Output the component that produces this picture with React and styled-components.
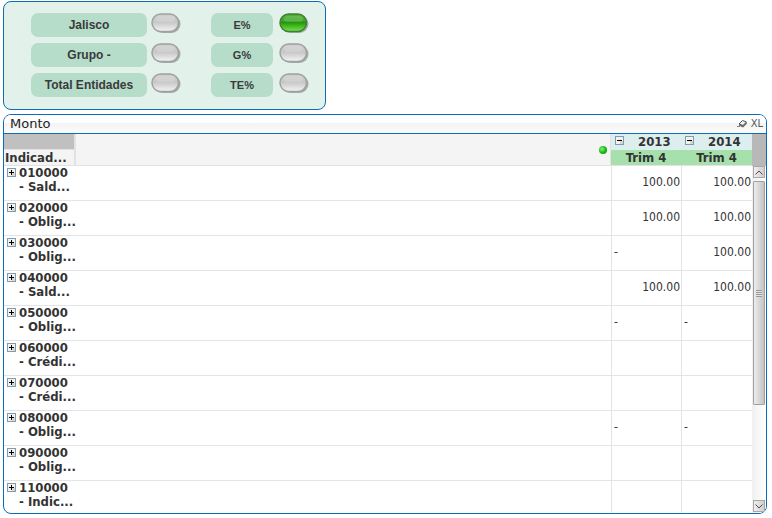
import React from 'react'
import styled, { createGlobalStyle } from 'styled-components'

const filters = [
    { left: 'Jalisco', right: 'E%', active: true },
    { left: 'Grupo -', right: 'G%', active: false },
    { left: 'Total Entidades', right: 'TE%', active: false },
]

const rows = [
    { code: '010000', name: '- Sald...', values: ['100.00', '100.00'] },
    { code: '020000', name: '- Oblig...', values: ['100.00', '100.00'] },
    { code: '030000', name: '- Oblig...', values: ['-', '100.00'] },
    { code: '040000', name: '- Sald...', values: ['100.00', '100.00'] },
    { code: '050000', name: '- Oblig...', values: ['-', '-'] },
    { code: '060000', name: '- Crédi...', values: ['', ''] },
    { code: '070000', name: '- Crédi...', values: ['', ''] },
    { code: '080000', name: '- Oblig...', values: ['-', '-'] },
    { code: '090000', name: '- Oblig...', values: ['', ''] },
    { code: '110000', name: '- Indic...', values: ['', ''] },
]

const years = ['2013', '2014']

const Lamp = ({ id, on }) => (
    <LampButton type='button' aria-labelledby={id} aria-pressed={on}>
        <svg width='30' height='22' viewBox='0 0 30 22'>
            <defs>
                <linearGradient id={`fill-${id}`} x1='0' y1='0' x2='0' y2='1'>
                    <stop offset='0' stopColor={on ? '#4fb034' : '#cfcfcf'} />
                    <stop offset='0.4' stopColor={on ? '#3fa627' : '#c8c8c8'} />
                    <stop offset='0.45' stopColor={on ? '#1f9206' : '#c6c6c6'} />
                    <stop offset='1' stopColor={on ? '#76e64e' : '#f4f4f4'} />
                </linearGradient>
            </defs>
            <rect x='2.5' y='2' width='27' height='18' rx='9' fill='#7f8a84' opacity='0.65' />
            <rect
                x='1'
                y='1'
                width='26.5'
                height='17.5'
                rx='8.75'
                fill={`url(#fill-${id})`}
                stroke={on ? '#3f7f35' : '#a0a0a0'}
                strokeWidth='1.5'
            />
            <rect
                x='5'
                y='3'
                width='19'
                height='6'
                rx='3'
                fill='#ffffff'
                opacity={on ? 0.15 : 0.15}
            />
        </svg>
    </LampButton>
)

const ToggleIcon = ({ plus }) => (
    <svg width='9' height='9' viewBox='0 0 9 9' shapeRendering='crispEdges'>
        <rect width='9' height='9' fill='#7c9cba' />
        <rect x='1' y='1' width='7' height='7' fill='#f4f1ea' />
        <rect x='5' y='5' width='3' height='3' fill='#dcd6ca' />
        <rect x='2' y='4' width='5' height='1' fill='#000000' />
        {plus && <rect x='4' y='2' width='1' height='5' fill='#000000' />}
    </svg>
)

const Arrow = ({ down }) => (
    <svg width='8' height='5' viewBox='0 0 8 5'>
        <path
            d={down ? 'M0.5 0.5 L4 4 L7.5 0.5' : 'M0.5 4.5 L4 1 L7.5 4.5'}
            fill='none'
            stroke='#6b3f46'
        />
    </svg>
)

const FilterPanel = () => (
    <Filters>
        {filters.map((f, i) => (
            <React.Fragment key={f.left}>
                <FilterLabel id={`entity-${i}`}>{f.left}</FilterLabel>
                <Lamp id={`entity-${i}`} on={false} />
                <FilterLabel id={`percent-${i}`} $small>
                    {f.right}
                </FilterLabel>
                <Lamp id={`percent-${i}`} on={f.active} />
            </React.Fragment>
        ))}
    </Filters>
)

const App = () => {
    return (
        <Page>
            <GlobalStyle />
            <FilterPanel />

            <Sheet>
                <Caption>
                    <h1>Monto</h1>
                    <CaptionTools>
                        <button type='button' aria-label='Clear'>
                            <svg width='12' height='10' viewBox='0 0 12 10'>
                                <path
                                    d='M3 5 L6.5 1.5 L10.5 3 L7 6.5 Z'
                                    fill='#f2f2f2'
                                    stroke='#4c4c4c'
                                />
                                <path
                                    d='M3 5 L3 6.5 L7 8.5 L10.8 4.8 L10.5 3 L7 6.5 Z'
                                    fill='#666666'
                                />
                                <path d='M1 7.5 H4' stroke='#888888' />
                            </svg>
                        </button>
                        <button type='button'>XL</button>
                    </CaptionTools>
                </Caption>

                <Content>
                    <Grid>
                        <colgroup>
                            <Col $w='72px' />
                            <Col />
                            <Col $w='70px' />
                            <Col $w='71px' />
                        </colgroup>
                        <thead>
                            <tr>
                                <BlankHead />
                                <SpanHead rowSpan={2}>
                                    <Dot />
                                </SpanHead>
                                {years.map((y) => (
                                    <YearHead key={y} scope='col'>
                                        <div>
                                            <Toggle type='button' aria-label={`Collapse ${y}`}>
                                                <ToggleIcon />
                                            </Toggle>
                                            <span>{y}</span>
                                        </div>
                                    </YearHead>
                                ))}
                            </tr>
                            <tr>
                                <NameHead scope='col'>Indicad...</NameHead>
                                {years.map((y) => (
                                    <QuarterHead key={y} scope='col'>
                                        Trim 4
                                    </QuarterHead>
                                ))}
                            </tr>
                        </thead>
                        <tbody>
                            {rows.map((r) => (
                                <Row key={r.code}>
                                    <RowHead scope='row'>
                                        <div>
                                            <Toggle type='button' aria-label={`Expand ${r.code}`}>
                                                <ToggleIcon plus />
                                            </Toggle>
                                            <span>
                                                {r.code}
                                                <br />
                                                {r.name}
                                            </span>
                                        </div>
                                    </RowHead>
                                    <td />
                                    {r.values.map((v, i) => (
                                        <Value key={years[i]} $empty={v === '-'}>
                                            {v}
                                        </Value>
                                    ))}
                                </Row>
                            ))}
                        </tbody>
                    </Grid>

                    {/** scroll rail */}
                    <Rail>
                        <Corner />
                        <ScrollButton type='button' aria-label='Scroll up'>
                            <Arrow />
                        </ScrollButton>
                        <Track>
                            <Thumb>
                                <Grip />
                            </Thumb>
                        </Track>
                        <ScrollButton type='button' aria-label='Scroll down'>
                            <Arrow down />
                        </ScrollButton>
                    </Rail>
                </Content>
            </Sheet>
        </Page>
    )
}

export default App

const GlobalStyle = createGlobalStyle`
    * {
        box-sizing: border-box;
    }

    body {
        margin: 0;
        background: #ffffff;
    }

    button {
        display: block;
        padding: 0;
        border: 0;
        background: none;
        font: inherit;
        color: inherit;
        cursor: pointer;
    }

    svg {
        display: block;
    }
`

const Page = styled.main`
    display: flex;
    flex-direction: column;
    align-items: flex-start;
    gap: 4px;
    padding: 1px 5px 4px 3px;
    font-family: 'DejaVu Sans Condensed', 'DejaVu Sans', sans-serif;
    color: #333333;
`

const Filters = styled.section`
    display: grid;
    grid-template-columns: 116px 56px 64px 30px;
    grid-auto-rows: 24px;
    gap: 6px 4px;
    padding: 11px 16px 12px 27px;
    border: 1px solid #0d6cb8;
    border-radius: 8px;
    background: #e2f1ea;
`

const FilterLabel = styled.span`
    display: flex;
    align-items: center;
    justify-content: center;
    margin-right: ${(props) => (props.$small ? '2px' : '0')};
    border-radius: 7px;
    background: #b6dcca;
    font-family: 'Liberation Sans', Arial, sans-serif;
    font-size: ${(props) => (props.$small ? '11px' : '12px')};
    font-weight: 700;
    line-height: 14px;
    color: #3a3a3a;
`

const LampButton = styled.button`
    width: 30px;
    height: 22px;
`

const Sheet = styled.section`
    align-self: stretch;
    overflow: hidden;
    border: 1px solid #0d6cb8;
    border-radius: 8px;
`

const Caption = styled.header`
    display: flex;
    align-items: center;
    justify-content: space-between;
    height: 19px;
    padding: 0 3px 0 6px;
    border-bottom: 1px solid #0d6cb8;
    background: linear-gradient(#ffffff 45%, #f3f3f3 45%, #fbfbfb);

    h1 {
        margin: 0;
        font-family: 'DejaVu Sans', sans-serif;
        font-size: 13px;
        font-weight: 400;
        line-height: 16px;
        color: #222222;
    }
`

const CaptionTools = styled.div`
    display: flex;
    align-items: center;
    gap: 3px;
    font-size: 11px;
    line-height: 14px;
    color: #555555;
`

const Content = styled.div`
    display: flex;
`

const Grid = styled.table`
    flex: 1;
    min-width: 0;
    table-layout: fixed;
    border-collapse: separate;
    border-spacing: 0;
    font-size: 13px;
    line-height: 14px;

    th,
    td {
        padding: 0;
    }

    th {
        font-weight: 700;
    }
`

const Col = styled.col`
    width: ${(props) => props.$w || 'auto'};
`

const BlankHead = styled.td`
    height: 16px;
    border-right: 2px solid #e2e2e2;
    border-bottom: 1px solid #e2e2e2;
    background: #c0c0c0;
`

const SpanHead = styled.td`
    border-right: 1px solid #e2e2e2;
    border-bottom: 1px solid #e2e2e2;
    background: #f4f4f4;
`

const Dot = styled.i`
    display: block;
    width: 8px;
    height: 8px;
    margin: 0 3px 0 auto;
    border-radius: 50%;
    background: radial-gradient(circle at 3px 3px, #8cf07c, #16c016 50%, #0a7a0a);
`

const YearHead = styled.th`
    height: 16px;
    background: #dceeee;
    vertical-align: top;

    div {
        display: flex;
        align-items: flex-start;
        padding-left: 4px;
    }

    button {
        margin-top: 2px;
    }

    span {
        padding-left: 14px;
        line-height: 16px;
    }
`

const NameHead = styled.th`
    && {
        padding-left: 1px;
    }
    height: 16px;
    border-right: 2px solid #e2e2e2;
    border-bottom: 1px solid #e2e2e2;
    background: #f4f4f4;
    text-align: left;
    vertical-align: bottom;
    white-space: nowrap;
`

const QuarterHead = styled.th`
    height: 16px;
    border-bottom: 1px solid #e2e2e2;
    background: #a6e0ad;
    text-align: center;
    vertical-align: bottom;
`

const Toggle = styled.button`
    flex: none;
    width: 9px;
    height: 9px;
`

const Row = styled.tr`
    th,
    td {
        height: 35px;
        border-bottom: 1px solid #e4e4e4;
    }

    &:last-child th,
    &:last-child td {
        height: 32px;
        border-bottom: 0;
    }
`

const RowHead = styled.th`
    text-align: left;
    vertical-align: top;
    white-space: nowrap;

    div {
        display: flex;
        gap: 3px;
        padding-left: 3px;
    }

    button {
        margin-top: 2px;
    }
`

const Value = styled.td`
    && {
        padding: 0 1px 2px 2px;
    }
    border-left: 1px solid #e4e4e4;
    font-size: 12px;
    text-align: ${(props) => (props.$empty ? 'left' : 'right')};
`

const Rail = styled.div`
    display: flex;
    flex-direction: column;
    align-items: center;
    width: 14px;
    padding-bottom: 1px;
    background: linear-gradient(90deg, #f0f0f0, #ffffff);
`

const Corner = styled.div`
    align-self: stretch;
    height: 32px;
    background: #b8b8b8;
`

const ScrollButton = styled.button`
    display: flex;
    align-items: center;
    justify-content: center;
    width: 12px;
    height: 12px;
    border: 1px solid #a8a8a8;
    background: linear-gradient(90deg, #eeeeee, #cfcfcf);
`

const Track = styled.div`
    flex: 1;
    width: 12px;
    padding: 3px 0;
`

const Thumb = styled.div`
    display: flex;
    align-items: center;
    justify-content: center;
    height: 71%;
    border: 1px solid #a0a0a0;
    border-radius: 1px;
    background: linear-gradient(90deg, #ececec, #c4c4c4);
`

const Grip = styled.i`
    width: 6px;
    height: 7px;
    background: repeating-linear-gradient(#999999 0 1px, #e4e4e4 1px 2px);
`
